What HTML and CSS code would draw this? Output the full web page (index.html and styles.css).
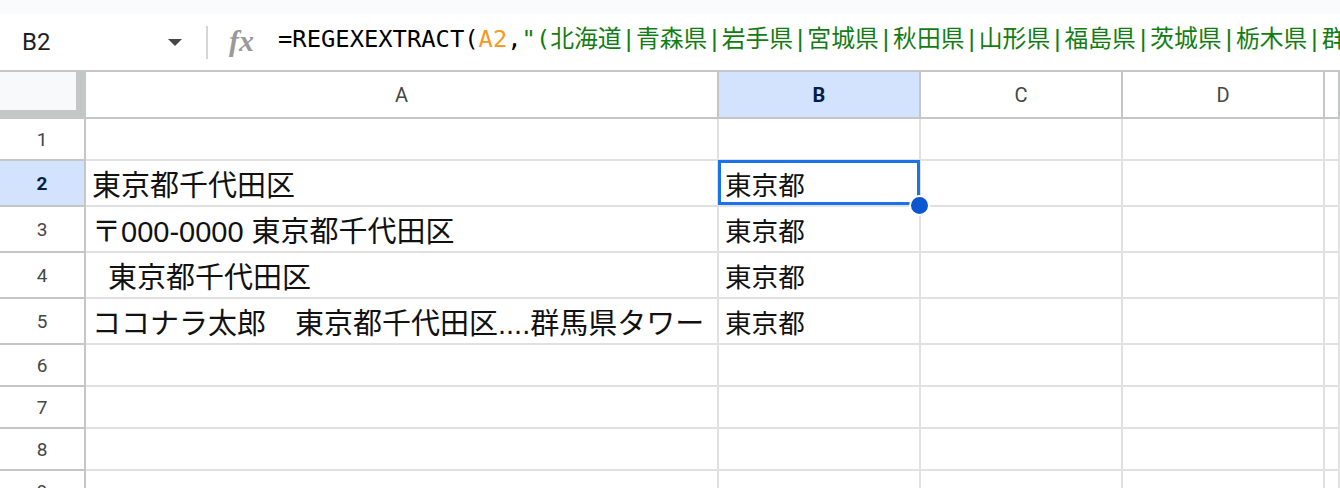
FILE: index.html
```html
<!DOCTYPE html>
<html lang="ja">
<head>
<meta charset="UTF-8">
<meta name="viewport" content="width=device-width, initial-scale=1">
<title>REGEXEXTRACT - Sheet</title>
<link rel="stylesheet" href="styles.css">
</head>
<body>
<div class="top-band"></div>
<div class="formula-bar">
  <div class="name-box">
    <span class="cell-ref">B2</span>
    <span class="caret"></span>
  </div>
  <div class="divider"></div>
  <span class="fx">fx</span>
  <div class="formula">=REGEXEXTRACT(<span class="ref">A2</span>,<span class="str">"(北海道|青森県|岩手県|宮城県|秋田県|山形県|福島県|茨城県|栃木県|群馬県|埼玉県|千葉県|東京都)"</span>)</div>
</div>
<div class="sheet">
  <div class="corner"></div>
  <div class="col-head">A</div>
  <div class="col-head active">B</div>
  <div class="col-head">C</div>
  <div class="col-head">D</div>
  <div class="col-head"></div>

  <div class="row-head">1</div>
  <div class="cell col-a"></div>
  <div class="cell col-b"></div>
  <div class="cell"></div>
  <div class="cell"></div>
  <div class="cell"></div>

  <div class="row-head active">2</div>
  <div class="cell col-a">東京都千代田区</div>
  <div class="cell col-b selected"><span>東京都</span><div class="sel-box"></div><div class="fill-handle"></div></div>
  <div class="cell"></div>
  <div class="cell"></div>
  <div class="cell"></div>

  <div class="row-head">3</div>
  <div class="cell col-a">〒000-0000 東京都千代田区</div>
  <div class="cell col-b">東京都</div>
  <div class="cell"></div>
  <div class="cell"></div>
  <div class="cell"></div>

  <div class="row-head">4</div>
  <div class="cell col-a">  東京都千代田区</div>
  <div class="cell col-b">東京都</div>
  <div class="cell"></div>
  <div class="cell"></div>
  <div class="cell"></div>

  <div class="row-head">5</div>
  <div class="cell col-a">ココナラ太郎　東京都千代田区....群馬県タワー</div>
  <div class="cell col-b">東京都</div>
  <div class="cell"></div>
  <div class="cell"></div>
  <div class="cell"></div>

  <div class="row-head">6</div>
  <div class="cell col-a"></div>
  <div class="cell col-b"></div>
  <div class="cell"></div>
  <div class="cell"></div>
  <div class="cell"></div>

  <div class="row-head">7</div>
  <div class="cell col-a"></div>
  <div class="cell col-b"></div>
  <div class="cell"></div>
  <div class="cell"></div>
  <div class="cell"></div>

  <div class="row-head">8</div>
  <div class="cell col-a"></div>
  <div class="cell col-b"></div>
  <div class="cell"></div>
  <div class="cell"></div>
  <div class="cell"></div>

  <div class="row-head">9</div>
  <div class="cell col-a"></div>
  <div class="cell col-b"></div>
  <div class="cell"></div>
  <div class="cell"></div>
  <div class="cell"></div>
</div>
</body>
</html>
```

FILE: styles.css
```css
body {
  margin: 0;
  background: #ffffff;
  font-family: Roboto, 'Liberation Sans', 'Noto Sans CJK JP', sans-serif;
  color: #1f1f1f;
  overflow: hidden;
  height: 488px;
}
.top-band {
  height: 14px;
  background: #f9fbfd;
}
.formula-bar {
  display: flex;
  align-items: center;
  height: 56px;
  background: #ffffff;
}
.name-box {
  display: flex;
  align-items: center;
  justify-content: space-between;
  width: 206px;
  box-sizing: border-box;
  padding-left: 22px;
  padding-right: 24px;
}
.cell-ref {
  font-size: 24px;
  color: #1f1f1f;
}
.caret {
  width: 0;
  height: 0;
  border-left: 7.5px solid transparent;
  border-right: 7.5px solid transparent;
  border-top: 7px solid #444746;
}
.divider {
  width: 2px;
  height: 33px;
  background: #d5d7d6;
}
.fx {
  display: inline-block;
  width: 30px;
  margin-left: 21px;
  font-family: 'Liberation Serif', serif;
  font-style: italic;
  font-weight: bold;
  font-size: 30px;
  color: #9a9a9a;
  line-height: 1;
  margin-bottom: 2px;
}
.formula {
  flex: 1;
  margin-left: 19px;
  margin-bottom: 12px;
  white-space: nowrap;
  overflow: hidden;
  font-family: 'DejaVu Sans Mono', 'Noto Sans CJK JP', monospace;
  font-size: 23.8px;
  color: #000000;
}
.formula .ref {
  color: #f59a23;
}
.formula .str {
  color: #137d13;
}
.sheet {
  display: grid;
  grid-template-columns: 86px 633px 202px 202px 202px 1fr;
  grid-template-rows: 47px 42px repeat(4, 46px) repeat(4, 42px);
  border-top: 2px solid #c4c7c5;
}
.sheet > div {
  box-sizing: border-box;
  display: flex;
  align-items: center;
  min-width: 0;
}
.corner {
  background: #f8f9fa;
  border-right: 10px solid #c4c7c5;
  border-bottom: 9px solid #c4c7c5;
}
.col-head {
  justify-content: center;
  font-size: 20px;
  color: #444746;
  border-right: 2px solid #c4c7c5;
  border-bottom: 2px solid #c4c7c5;
}
.row-head {
  justify-content: center;
  font-size: 19px;
  color: #444746;
  border-right: 2px solid #c4c7c5;
  border-bottom: 2px solid #c4c7c5;
}
.col-head.active,
.row-head.active {
  background: #d3e3fd;
  color: #041e49;
  font-weight: bold;
}
.cell {
  border-right: 2px solid #e1e1e1;
  border-bottom: 2px solid #e1e1e1;
  font-family: 'Liberation Sans', 'Noto Sans CJK JP', sans-serif;
  white-space: pre;
  overflow: hidden;
  color: #111111;
}
.col-a {
  font-size: 29px;
  padding-left: 6px;
}
.col-b {
  font-size: 26.6px;
  padding-left: 6px;
}
.cell.selected {
  position: relative;
  overflow: visible;
}
.sel-box {
  position: absolute;
  top: -1px;
  left: -1px;
  right: -1px;
  bottom: 0;
  border: 3px solid #1a73e8;
}
.fill-handle {
  position: absolute;
  right: -11px;
  bottom: -11px;
  width: 21px;
  height: 21px;
  box-sizing: border-box;
  border-radius: 50%;
  background: #0b57d0;
  border: 2px solid #ffffff;
  z-index: 2;
}
```
